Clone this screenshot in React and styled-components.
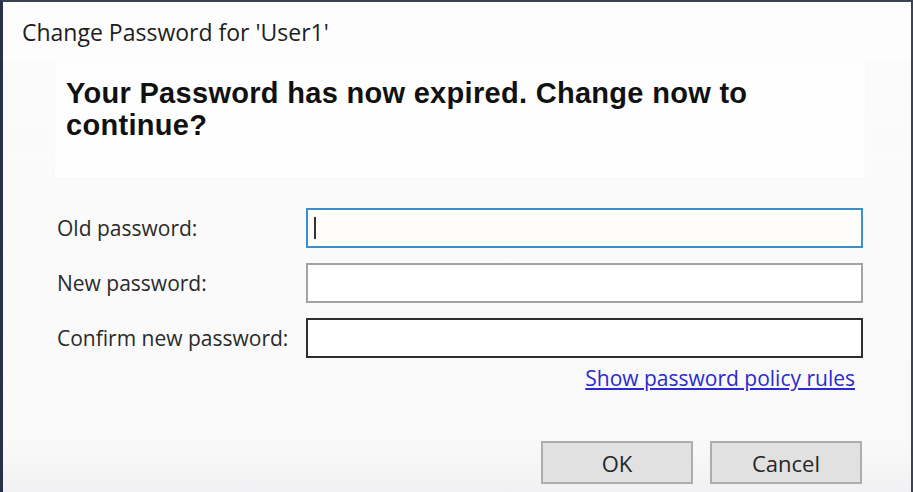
import React from "react";
import styled, { createGlobalStyle } from "styled-components";

const GlobalStyle = createGlobalStyle`
  html, body {
    margin: 0;
    padding: 0;
    background: #f9f9f9;
  }
  * {
    box-sizing: border-box;
  }
`;

const Window = styled.div`
  width: 913px;
  height: 492px;
  display: flex;
  flex-direction: column;
  background: linear-gradient(#fbfbfb 0, #f9f9f9 440px, #f1f1f3 492px);
  border-left: 3px solid #28314a;
  border-right: 2px solid #3a4255;
  border-top: 2px solid #3a4255;
  font-family: "Open Sans", "Noto Sans", sans-serif;
  color: #222;
  overflow: hidden;
`;

const TitleBar = styled.div`
  height: 58px;
  display: flex;
  align-items: center;
  padding-left: 19px;
  padding-top: 2px;
  font-size: 23px;
  color: #1e1e1e;
  background: #fdfdfd;
`;

const MessagePanel = styled.div`
  margin-left: 52px;
  width: 810px;
  height: 118px;
  padding: 17px 11px 0;
  background: #fefefe;
  box-shadow: 0 0 2px rgba(0, 0, 0, 0.03);
`;

const Heading = styled.h1`
  margin: 0;
  font-family: "Liberation Sans", Arial, sans-serif;
  font-weight: bold;
  font-size: 29px;
  line-height: 32px;
  letter-spacing: 0.3px;
  color: #111;
`;

const Form = styled.div`
  margin-top: 30px;
  margin-left: 54px;
  display: grid;
  grid-template-columns: 249px 557px;
  row-gap: 15px;
  align-items: center;
`;

const Label = styled.label`
  font-size: 21px;
  color: #2a2a2a;
`;

const Field = styled.div`
  height: 40px;
  background: ${(p) => (p.$focused ? "#fffdf9" : "#fff")};
  border: 2px solid ${(p) => p.$border};
  display: flex;
  align-items: center;
  padding-left: 6px;
`;

const Caret = styled.span`
  width: 2px;
  height: 22px;
  background: #333;
`;

const LinkRow = styled.div`
  display: flex;
  justify-content: flex-end;
  padding-right: 56px;
  margin-top: 6px;
`;

const Link = styled.a`
  font-size: 21px;
  color: #2a2ad0;
  text-decoration: underline;
  cursor: pointer;
`;

const ButtonRow = styled.div`
  display: flex;
  justify-content: flex-end;
  gap: 17px;
  padding-right: 49px;
  margin-top: 49px;
`;

const Button = styled.button`
  width: 152px;
  height: 43px;
  background: #e1e1e1;
  border: 2px solid #adadad;
  font-family: "Open Sans", "Noto Sans", sans-serif;
  font-size: 22px;
  color: #262626;
  padding: 0;
`;

const fields = [
  { label: "Old password:", border: "#3b8fd0", focused: true },
  { label: "New password:", border: "#a3a3a3" },
  { label: "Confirm new password:", border: "#2e2e2e" },
];

export default function App() {
  return (
    <>
      <GlobalStyle />
      <Window>
        <TitleBar>Change Password for 'User1'</TitleBar>
        <MessagePanel>
          <Heading>
            Your Password has now expired. Change now to
            <br />
            continue?
          </Heading>
        </MessagePanel>
        <Form>
          {fields.map((f) => (
            <React.Fragment key={f.label}>
              <Label>{f.label}</Label>
              <Field $border={f.border} $focused={f.focused}>
                {f.focused && <Caret />}
              </Field>
            </React.Fragment>
          ))}
        </Form>
        <LinkRow>
          <Link>Show password policy rules</Link>
        </LinkRow>
        <ButtonRow>
          <Button>OK</Button>
          <Button>Cancel</Button>
        </ButtonRow>
      </Window>
    </>
  );
}
